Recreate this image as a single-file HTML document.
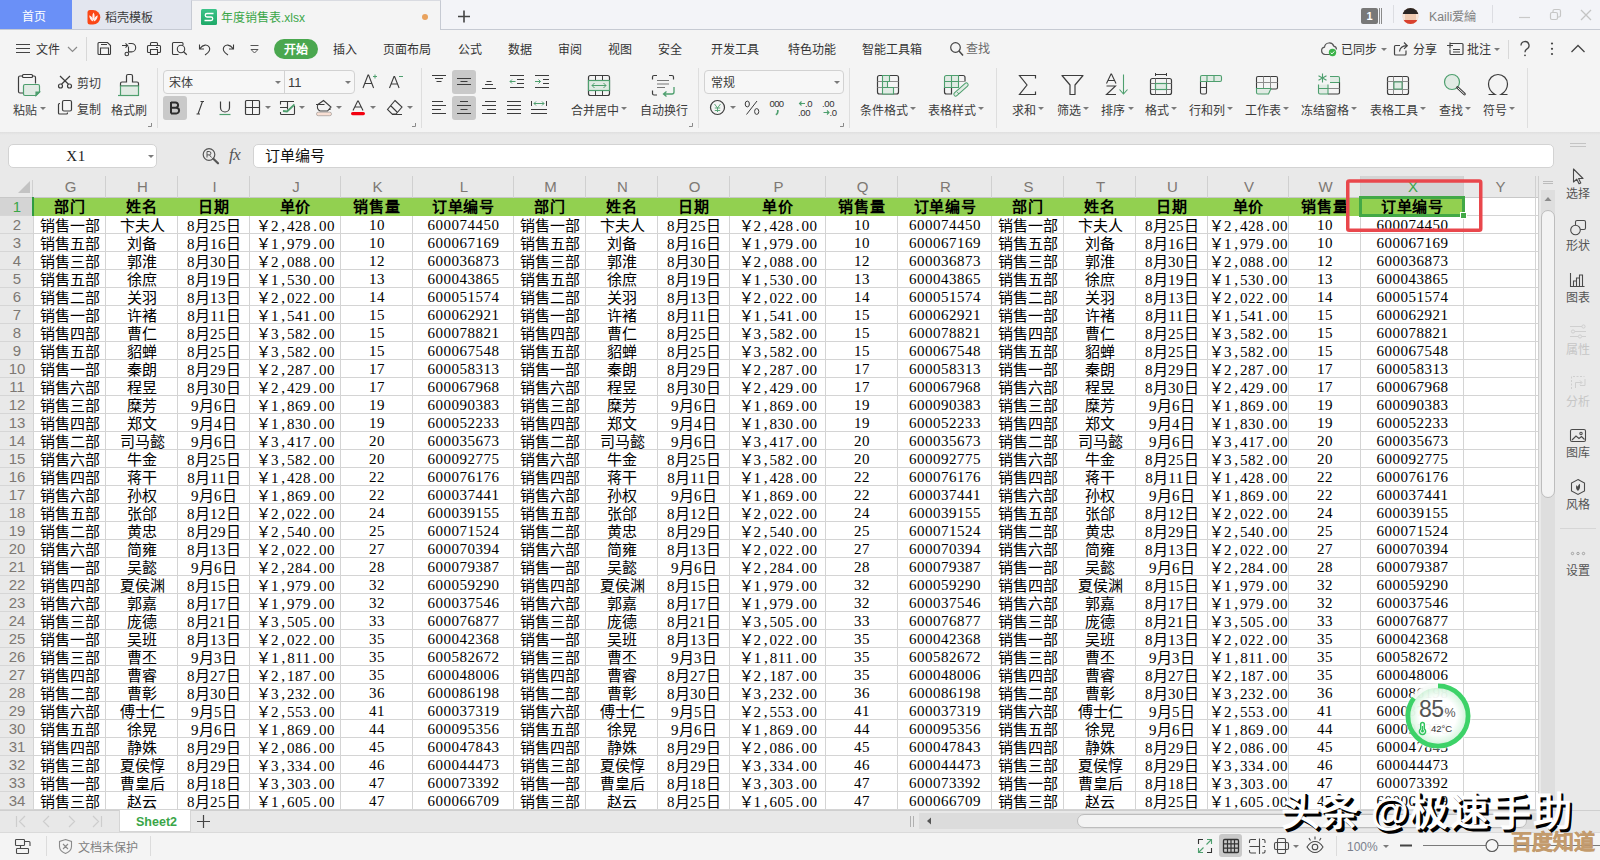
<!DOCTYPE html>
<html lang="zh-CN"><head><meta charset="utf-8"><title>年度销售表.xlsx - WPS</title>
<style>
*{box-sizing:border-box;margin:0;padding:0}
html,body{width:1600px;height:860px;overflow:hidden;background:#e9e9e9}
body{position:relative;font-family:"Liberation Sans",sans-serif;font-size:12px;color:#333}
.a{position:absolute}
svg{position:absolute;overflow:visible}
/* ---------- tab bar ---------- */
#tabs{left:0;top:0;width:1600px;height:30px;background:#f3f4f8;border-bottom:1px solid #c6cad3}
#t1{left:0;top:0;width:72px;height:29px;background:#6a90f7;color:#fff;text-align:center;line-height:34px;font-size:12px;padding-right:4px;overflow:hidden}
#t2{left:72px;top:0;width:119px;height:29px;background:#e3e6ef;line-height:36px;overflow:hidden;font-size:12px;color:#3a3a3a;padding-left:33px}
#t3{left:191px;top:0;width:250px;height:30px;background:#f4f4f4;border:1px solid #c6cad3;border-bottom:none;border-top-color:#d9dbe1;line-height:34px;font-size:12px;color:#3aa648;padding-left:29px;overflow:hidden}
/* ---------- ribbon ---------- */
#rib{left:0;top:30px;width:1600px;height:102px;background:#f4f4f4}
.m{position:absolute;top:42px;height:16px;line-height:16px;font-size:12px;color:#333;white-space:nowrap}
.l{position:absolute;margin:2px 0 0 -.5px;height:16px;line-height:16px;font-size:12px;color:#3b3b3b;white-space:nowrap}
.vs{position:absolute;width:1px;background:#dedede}
.dd{position:absolute;width:0;height:0;border-left:3px solid transparent;border-right:3px solid transparent;border-top:3px solid #7a7a7a}
.box{position:absolute;background:#f7f7f7;border:1px solid #d2d2d2;border-radius:4px}
.sel{position:absolute;background:#c9c9c9;border-radius:3px}
/* ---------- formula bar ---------- */
#fsh{left:0;top:132px;width:1600px;height:3px;background:linear-gradient(#dfdfdf,#e9e9e9)}
#nb{left:8px;top:144px;width:149px;height:24px;background:#fff;border:1px solid #d3d3d3;border-radius:5px}
#fb{left:253px;top:144px;width:1301px;height:24px;background:#fff;border:1px solid #d3d3d3;border-radius:5px}
/* ---------- grid ---------- */
#grid{left:33px;top:198px;width:1505px;height:612px;background:#fff;overflow:hidden}
.ch{position:absolute;top:176px;height:22px;line-height:22px;text-align:center;padding-left:2px;margin-left:1px;font-size:15px;color:#7d7873;border-right:1px solid #d0d0d0}
.rh{position:absolute;left:0;padding-left:1px;width:33px;height:18px;line-height:18px;text-align:center;font-size:15px;color:#7d7873;border-bottom:1px solid #d6d6d6}
.r{position:absolute;left:0;width:1505px;height:18px;border-bottom:1px solid #d4d4d4;white-space:nowrap;font:15px/19px "Liberation Sans",sans-serif;color:#000}
.r b,.r i{display:inline-block;padding-left:2px;height:17px;text-align:center;font-style:normal;font-weight:normal;vertical-align:top;overflow:hidden}
.r u{display:inline-block;width:8px;text-decoration:none;text-align:center;letter-spacing:0}
.r s,.r .n{font-family:"Liberation Serif",serif;text-decoration:none;letter-spacing:.5px}
#r1{height:18px;background:#92d050;border-bottom:none;font-weight:bold;line-height:18px;letter-spacing:.7px}
#r1 b{font-weight:bold;height:18px}
.vl{position:absolute;top:18px;width:1px;height:594px;background:#d4d4d4}
.c0{width:72px}.c1{width:72px}.c2{width:72px}.c3{width:91px}.c4{width:72px}.c5{width:101px}.c6{width:72px}.c7{width:72px}.c8{width:72px}.c9{width:96px}.c10{width:72px}.c11{width:94px}.c12{width:72px}.c13{width:72px}.c14{width:72px}.c15{width:81px}.c16{width:72px}.c17{width:103px}.c18{width:72px}
</style></head><body>
<div id="tabs" class="a"></div>
<div id="t1" class="a">首页</div>
<div id="t2" class="a">稻壳模板</div>
<div id="t3" class="a">年度销售表.xlsx</div>
<svg style="left:0;top:0" width="1600" height="30">
<path d="M87.5 12.5a2.5 2.5 0 0 1 2.5-2.5h3a7.3 7.3 0 0 1 0 14.6h-3a2.5 2.5 0 0 1-2.5-2.5z" fill="#fb4716"/>
<path d="M93.500 12.500c1.500 2.200 1.500 5.200 0 8.500c-1.500-3.300-1.500-6.300 0-8.500zM89.300 15.200c2.600 1 3.700 3 3.800 6.200c-2.600-1.100-3.800-3.100-3.800-6.200zM97.700 15.200c-2.600 1-3.700 3-3.800 6.200c2.600-1.100 3.800-3.100 3.800-6.200z" fill="#fff" fill-opacity=".92"/>
<defs><linearGradient id="sg" x1="0" y1="0" x2="0" y2="1"><stop offset="0" stop-color="#3cc389"/><stop offset="1" stop-color="#1ea968"/></linearGradient></defs><rect x="201" y="9" width="16" height="16" rx="1.500" fill="url(#sg)"/>
<path d="M213.500 13.500h-6.500a1.750 1.750 0 0 0 0 3.500h4a1.750 1.750 0 0 1 0 3.500h-6.500" fill="none" stroke="#fff" stroke-width="1.300"/>
<circle cx="425" cy="17" r="3" fill="#e9a25d"/>
<path d="M458 16.500h12M464 10.500v12" stroke="#444" stroke-width="1.600"/>
<rect x="1361" y="8" width="17" height="16" rx="2" fill="#787878"/>
<path d="M1379.500 8v16M1381.500 8v16" stroke="#8a8a8a" stroke-width="1"/>
<path d="M1393.500 5v18M1492.500 5v18" stroke="#dcdde2" stroke-width="1"/>
<clipPath id="av"><circle cx="1410.500" cy="16" r="8"/></clipPath>
<g clip-path="url(#av)"><rect x="1402" y="8" width="17" height="17" fill="#f0c9b0"/><rect x="1402" y="7" width="17" height="7" fill="#2b2523"/><rect x="1402" y="20" width="17" height="5" fill="#d9412f"/><rect x="1402" y="14" width="3" height="6" fill="#f7e4d8"/><rect x="1416" y="14" width="3" height="6" fill="#f7e4d8"/></g>
<path d="M1519 17.500h11" stroke="#c9c9c9" stroke-width="1.200"/>
<rect x="1550.500" y="12.500" width="7" height="7" rx="1.500" fill="none" stroke="#c6c6c6" stroke-width="1.200"/><path d="M1553 12.500v-1.500a1.500 1.500 0 0 1 1.500-1.500h4.500a1.500 1.500 0 0 1 1.500 1.500v4.500a1.500 1.500 0 0 1-1.500 1.500h-1.500" fill="none" stroke="#c6c6c6" stroke-width="1.200"/>
<path d="M1581 10l10 10M1591 10l-10 10" stroke="#c4c4c4" stroke-width="1.300"/>
</svg>
<div class="a" style="left:1361px;top:8px;width:17px;height:16px;line-height:16px;text-align:center;color:#fff;font-weight:bold;font-size:11px">1</div>
<div class="a" style="left:1429px;top:9px;height:16px;line-height:16px;font-size:12.300px;color:#808080;white-space:nowrap">Kaili爱綸</div>
<div id="rib" class="a"></div>
<svg style="left:0;top:30px" width="1600" height="36" viewBox="0 30 1600 36" fill="none" stroke="#3c3c3c" stroke-width="1.200">
<path d="M16 44.500h14M16 48.500h14M16 52.500h14" stroke="#444"/>
<path d="M68 47l4.500 4.500l4.500-4.500" stroke="#8a8a8a"/>
<path d="M86.500 37v24" stroke="#d8d8d8" stroke-width="1"/>
<path d="M99 42.500h8.500l3 3v8a1 1 0 0 1-1 1h-10.500a1 1 0 0 1-1-1v-10a1 1 0 0 1 1-1zM101 44.500h6M100.500 54.500v-6.500h8v6.500" stroke-width="1.100"/>
<path d="M122 45.500h5.500M125.500 43.300l2.200 2.200l-2.200 2.200M128.500 43.500h3a4.200 4.200 0 0 1 0 8.400h-3.500M128.500 46.500v6" stroke-width="1.100"/><circle cx="126.800" cy="54" r="1.800" stroke-width="1.100"/>
<path d="M150.500 45.500v-2a1 1 0 0 1 1-1h5a1 1 0 0 1 1 1v2M150.500 52.500h-2a1 1 0 0 1-1-1v-5a1 1 0 0 1 1-1h11a1 1 0 0 1 1 1v5a1 1 0 0 1-1 1h-2M150.500 49.500h7v5h-7zM156 47.500h2" stroke-width="1.100"/>
<path d="M178.500 54.500h-5a1 1 0 0 1-1-1v-10a1 1 0 0 1 1-1h8.500a1 1 0 0 1 1 1v1.500" stroke-width="1.100"/><circle cx="181" cy="49" r="3.700" stroke-width="1.100"/><path d="M183.600 51.800l3.200 3"/>
<path d="M199.500 44.500v4.500h4.500M200 48.500c3-4.200 7.500-4.500 9.300-1.200c1.500 3-.8 5.500-4.300 7.700" stroke-width="1.100"/>
<path d="M233.500 44.500v4.500h-4.500M233 48.500c-3-4.200-7.500-4.500-9.300-1.200c-1.500 3 .8 5.500 4.300 7.700" stroke-width="1.100"/>
<path d="M250.500 45.500h8M251 49.500h7l-3.500 3.500z" stroke="#555" stroke-width="1"/>
<rect x="274" y="39" width="44" height="20" rx="10" fill="#4aa74f" stroke="none"/>
<circle cx="955.500" cy="47.500" r="4.800" stroke="#444"/><path d="M959 51l4 4.500" stroke="#444" stroke-width="1.500"/>
<path d="M1331 54.500h-6a3.700 3.700 0 0 1-.5-7.300a4.800 4.800 0 0 1 9.300-1a3.400 3.400 0 0 1 2.700 3.300" stroke="#555"/>
<circle cx="1332.500" cy="52.500" r="3.700" fill="#3cb34a" stroke="none"/><path d="M1330.700 52.600l1.300 1.300l2.300-2.500" stroke="#fff" stroke-width="1"/>
<path d="M1400 45.500h-4.500a1 1 0 0 0-1 1v7.500a1 1 0 0 0 1 1h9.500a1 1 0 0 0 1-1v-3.500M1399.500 51.500c.5-3.500 2.700-5.500 7-5.800M1404 42.500l3.300 3.200l-3.300 3.200" stroke="#444"/>
<path d="M1450.500 43.500h11.500a1 1 0 0 1 1 1v9a1 1 0 0 1-1 1h-11a1 1 0 0 1-1-1v-4M1447 45.500h6M1450 42.500v6M1453 49.500h7M1453 52h7" stroke="#444"/>
<path d="M1508.500 40v19" stroke="#d8d8d8" stroke-width="1"/>
<path d="M1521 45.500a4 4 0 1 1 5.800 3.600c-1.300.8-1.800 1.600-1.800 3.100" stroke="#444" stroke-width="1.300"/><circle cx="1525" cy="55.300" r=".9" fill="#444" stroke="none"/>
<g fill="#444" stroke="none"><circle cx="1552" cy="43.500" r="1.100"/><circle cx="1552" cy="48.800" r="1.100"/><circle cx="1552" cy="54" r="1.100"/></g>
<path d="M1571.500 52l6.500-6.500l6.500 6.500" stroke="#444" stroke-width="1.300"/>
</svg>
<div class="m" style="left:36px">文件</div>
<div class="m" style="left:333px">插入</div>
<div class="m" style="left:383px">页面布局</div>
<div class="m" style="left:458px">公式</div>
<div class="m" style="left:508px">数据</div>
<div class="m" style="left:558px">审阅</div>
<div class="m" style="left:608px">视图</div>
<div class="m" style="left:658px">安全</div>
<div class="m" style="left:711px">开发工具</div>
<div class="m" style="left:788px">特色功能</div>
<div class="m" style="left:862px">智能工具箱</div>
<div class="m" style="left:965px;left:966px;top:41px;color:#6a6a6a">查找</div>
<div class="m" style="left:1341px">已同步</div>
<div class="m" style="left:1413px">分享</div>
<div class="m" style="left:1467px">批注</div>
<div class="m" style="left:274px;width:44px;text-align:center;color:#fff;font-weight:bold">开始</div>
<div class="dd" style="left:1381px;top:48px"></div><div class="dd" style="left:1494px;top:48px"></div>
<div class="sel" style="left:163px;top:96px;width:24px;height:24px"></div>
<div class="sel" style="left:452px;top:70px;width:24px;height:24px"></div>
<div class="sel" style="left:452px;top:96px;width:24px;height:24px"></div>
<div class="box" style="left:163px;top:70px;width:192px;height:24px"></div>
<div class="a" style="left:284px;top:71px;width:1px;height:22px;background:#d2d2d2"></div>
<div class="box" style="left:704px;top:70px;width:140px;height:24px"></div>
<div class="vs" style="left:157px;top:68px;height:60px"></div>
<div class="vs" style="left:421px;top:68px;height:60px"></div>
<div class="vs" style="left:698px;top:68px;height:60px"></div>
<div class="vs" style="left:849px;top:68px;height:60px"></div>
<div class="vs" style="left:996px;top:68px;height:60px"></div>
<div class="vs" style="left:1527px;top:68px;height:60px"></div>
<div class="l" style="left:169.5px;top:73px">宋体</div><div class="l" style="left:288.5px;top:73px;font-size:13px">11</div><div class="l" style="left:711.5px;top:73px">常规</div>
<div class="dd" style="left:275px;top:81px"></div><div class="dd" style="left:345px;top:81px"></div><div class="dd" style="left:834px;top:81px"></div>
<svg style="left:0;top:66px" width="1600" height="65" viewBox="0 66 1600 65" fill="none" stroke="#3c3c3c" stroke-width="1.200">
<path d="M22.500 76h-2.500a1.500 1.500 0 0 0-1.500 1.500v14a1.500 1.500 0 0 0 1.500 1.500h3M32.500 76h1.500a1.500 1.500 0 0 1 1.500 1.500v6"/><rect x="22.500" y="74.500" width="10" height="3" rx="1"/>
<path d="M25 84.500h13a1.500 1.500 0 0 1 1.500 1.500v6l-3.500 3.500h-11a1.500 1.500 0 0 1-1.500-1.500v-8a1.500 1.500 0 0 1 1.500-1.500z" fill="#e1ebe4" stroke="#4e9f6e"/><path d="M39.500 92h-3.500v3.500z" fill="#4e9f6e" stroke="#4e9f6e"/>
<circle cx="60.500" cy="86" r="2"/><circle cx="69.500" cy="86" r="2"/><path d="M61.500 84.300l8.500-8.300M68.500 84.300l-8.500-8.300"/>
<rect x="62.500" y="100.500" width="9" height="10.500" rx="1.500"/><path d="M60 103.500h-.5a1 1 0 0 0-1 1v8.500a1 1 0 0 0 1 1h7a1 1 0 0 0 1-1v-.500"/>
<path d="M126.500 76a1.500 1.500 0 0 1 1.500-1.500h3a1.500 1.500 0 0 1 1.500 1.500v6h4.500a1.500 1.500 0 0 1 1.500 1.500v2.500h-18v-2.500a1.500 1.500 0 0 1 1.500-1.500h4.500z"/><path d="M120.500 86h18v9.500h-18z" fill="#e1ebe4" stroke="#4e9f6e"/><path d="M118 95.500h20.500" stroke="#4e9f6e"/>
<path d="M151.5 123v3.500h-3.500" stroke="#8a8a8a" stroke-width="1"/>
<path d="M415.5 123v3.500h-3.500" stroke="#8a8a8a" stroke-width="1"/>
<path d="M692.5 123v3.500h-3.500" stroke="#8a8a8a" stroke-width="1"/>
<path d="M843.5 123v3.500h-3.500" stroke="#8a8a8a" stroke-width="1"/>
<path d="M363 88l5-13h.6l5 13M365 83.500h6.600" stroke-width="1.100"/><path d="M373 76.500h4M375 74.500v4" stroke="#4e9f6e" stroke-width="1"/>
<path d="M389.500 88l4.500-11.500h.6l4.500 11.500M391.300 84h6" stroke-width="1.100"/><path d="M399 76.500h4" stroke="#4e9f6e" stroke-width="1"/>
<path d="M171 102v11.500M171 102.500h4.500a2.600 2.600 0 0 1 0 5.200h-4.500M171 107.700h5.200a2.900 2.900 0 0 1 0 5.800h-5.200" stroke="#2e2e2e" stroke-width="2"/>
<path d="M198 114l4.500-12.500M196.500 114h3.500M200.500 101.500h3.500" stroke-width="1.100"/>
<path d="M220.500 101.500v6a4.500 4.500 0 0 0 9 0v-6" stroke-width="1.200"/><path d="M219.500 114.500h11" stroke="#4e9f6e"/>
<rect x="245.500" y="100.500" width="14" height="14" rx="1"/><path d="M252.500 100.500v14M245.500 107.500h14" stroke-width="1"/>
<path d="M294 101.500h-14M280 107.500h7M280.500 101.500v3M287.500 101.500v8M294.500 106v7.500a1 1 0 0 1-1 1h-12a1 1 0 0 1-1-1v-1.500" stroke-width="1.100"/><path d="M283 111l4 .5l7.500-7" stroke="#4e9f6e" stroke-width="1.800"/>
<path d="M323.500 100.500l7.500 6.500l-3.500 4h-7.500a4.500 4.500 0 0 1-2-6.500zM316 104.500h8.500M330 107.500v2.500" stroke-width="1.100"/><rect x="316.500" y="112.200" width="15" height="3.500" rx="1.700" fill="#f9dfd3" stroke="#a9a29e" stroke-width=".8"/>
<path d="M353 110.500l4.700-9.500h.6l4.700 9.500M354.800 107h6.400" stroke-width="1.100"/><rect x="351" y="112" width="14" height="3.200" rx="1.600" fill="#f2000f" stroke="none"/>
<path d="M395 100.500l7 6.500l-6 7h-4l-4.500-4.500zM391 106l6 6M392 114.500h10" stroke-width="1.100"/>
<path d="M432 75.500h14M435 78.500h8M436.500 81.500h5" stroke-width="1"/>
<path d="M457 78.500h14M460.500 81.500h7M457 84.500h14" stroke-width="1.100"/>
<path d="M486.500 81.500h5M485 84.500h8M482 88.500h14" stroke-width="1"/>
<path d="M510 75.500h14M517 79.500h7M517 83.500h7M510 87.500h14" stroke-width="1"/><path d="M515.500 81.500h-5.500M512 79.500l-2 2l2 2" stroke="#4e9f6e" stroke-width="1"/>
<path d="M535 75.500h14M543 79.500h6M543 83.500h6M535 87.500h14" stroke-width="1"/><path d="M535 81.500h5.500M538.500 79.500l2 2l-2 2" stroke="#4e9f6e" stroke-width="1"/>
<path d="M432 101.500h11M432 105.500h14M432 109.500h9M432 113.500h14" stroke-width="1"/>
<path d="M460 101.500h8M457 105.500h14M460.500 109.500h7M457 113.500h14" stroke-width="1.100"/>
<path d="M485 101.500h11M482 105.500h14M487 109.500h9M482 113.500h14" stroke-width="1"/>
<path d="M507 101.500h14M507 105.500h14M507 109.500h14M507 113.500h14" stroke-width="1"/>
<path d="M531.500 101v5M546.500 101v5M531 109.500h16M531 113.500h16" stroke-width="1"/><path d="M534 103.500h10M536 101.500l-2 2l2 2M542 101.500l2 2l-2 2" stroke="#4e9f6e" stroke-width="1"/>
<rect x="588.500" y="75.500" width="21" height="20" rx="2"/><path d="M595.500 75.500v5M602.500 75.500v5M595.500 90.500v5M602.500 90.500v5" stroke-width="1"/><rect x="588.500" y="80.500" width="21" height="10" fill="#e1ebe4" stroke="#4e9f6e"/><path d="M592 85.500h14M594.500 83l-2.500 2.500l2.500 2.500M603.500 83l2.500 2.500l-2.500 2.500" stroke="#4e9f6e" stroke-width="1"/>
<path d="M652.500 79.500v-2.500a1.500 1.500 0 0 1 1.500-1.500h3M669 75.500h3a1.500 1.500 0 0 1 1.500 1.500v2.500M652.500 90.500v3a1.500 1.500 0 0 0 1.500 1.500h3" /><path d="M657 80.500h12M657 84h12M657 87.500h8" stroke="#777" stroke-width="1"/><path d="M674 87v5a2 2 0 0 1-2 2h-8M666.500 91.500l-3 2.500l3 2.500" stroke="#4e9f6e" stroke-width="1.300"/>
<circle cx="717.500" cy="107.500" r="7"/><path d="M714.500 104l3 4l3-4M717.500 108v4M714.800 108h5.400M714.800 110.500h5.400" stroke="#4e9f6e" stroke-width=".9"/>
<ellipse cx="747.300" cy="104" rx="2.100" ry="2.900" stroke-width="1"/><ellipse cx="756.700" cy="111.500" rx="2.100" ry="2.900" stroke-width="1"/><path d="M757 101l-10.500 13.500" stroke-width="1"/>
<path d="M777.800 110v1.800c0 1.500-.7 2.500-2 3" stroke="#4e9f6e" stroke-width="1.700"/>
<path d="M805 103.500h-5.500M801.500 101.500l-2 2l2 2M829 112.500h-5.500M827 110.500l2 2l-2 2" stroke="#4e9f6e" stroke-width="1.100"/>
<rect x="877.500" y="75.500" width="21" height="18.500" rx="2"/><path d="M877.500 81.500h21M877.500 87.500h21" stroke-width="1" stroke="#8c8c8c"/><path d="M882.500 75.500h7v6h-7zM882.500 81.500h5v6h-5zM882.500 87.500h11v6.500h-11z" fill="#e1ebe4" stroke="#4e9f6e" stroke-width="1.100"/>
<path d="M958.500 75.500h4.500a2 2 0 0 1 2 2v4M944.500 87.500v4.500a2 2 0 0 0 2 2h5v-6.500" stroke-width="1.200"/><path d="M958.500 81.500h6.500" stroke="#999" stroke-width="1"/><path d="M946.500 75.500h12v12h-14v-10a2 2 0 0 1 2-2zM951.500 75.500v12M944.500 81.500h14" fill="#e1ebe4" stroke="#4e9f6e" stroke-width="1.100"/><rect x="952" y="87.700" width="18" height="3.600" rx="1.800" transform="rotate(-42 961 89.500)" fill="#e1ebe4" stroke="#4e9f6e" stroke-width="1"/><path d="M957.300 92.200l1.600 1.800" stroke="#4e9f6e" stroke-width="1"/>
<path d="M1035.500 78.500v-3h-16l7.500 9.500l-7.500 9.500h16v-3" stroke-width="1.200"/>
<path d="M1062 75.500h21l-8 9.500v9.500h-5v-9.500z" stroke-width="1.200" stroke-linejoin="round"/>
<path d="M1106.500 83.500l4.500-9.500h.5l4.500 9.500M1108 80.500h6.500M1106.500 86h9l-9 8.500h9.500" stroke-width="1.100"/><path d="M1123.500 74.500v19M1119.500 89.500l4 4.500l4-4.500" stroke="#4e9f6e" stroke-width="1.100"/>
<rect x="1150.500" y="78.500" width="21" height="16" rx="2"/><path d="M1155.500 78.500v16M1166.500 78.500v16M1150.500 83.500h21M1150.500 89.500h21" stroke-width="1" stroke="#777"/><rect x="1155.500" y="83.500" width="11" height="6" fill="#e1ebe4" stroke="#4e9f6e"/><path d="M1155 74.500h12M1155.500 73v3M1166.500 73v3" stroke-width="1"/>
<path d="M1200.500 81.500v11a1.500 1.500 0 0 0 1.500 1.500h3a1.500 1.500 0 0 0 1.500-1.500v-11M1200.500 87.500h6" stroke-width="1.100"/><path d="M1200.500 81.500v-4.500a1.500 1.500 0 0 1 1.500-1.500h18a1.500 1.500 0 0 1 1.500 1.500v3a1.500 1.500 0 0 1-1.500 1.500zM1207 75.500v6M1214 75.500v6" fill="#e1ebe4" stroke="#4e9f6e" stroke-width="1.100"/>
<path d="M1256.500 88.500v-10.500a1.500 1.500 0 0 1 1.500-1.500h18a1.500 1.500 0 0 1 1.500 1.500v9.500a1.500 1.500 0 0 1-1.500 1.500h-5" stroke-width="1.100"/><path d="M1263.500 76.500v12M1270.500 76.500v12M1256.500 82.500h21" stroke="#8c8c8c" stroke-width="1"/><path d="M1256.500 88.500h14.500l-2.500 5.500h-10.500a1.500 1.500 0 0 1-1.500-1.500z" fill="#e1ebe4" stroke="#4e9f6e" stroke-width="1.100"/>
<path d="M1330 76.500h8a1.500 1.500 0 0 1 1.500 1.500v4.500h-9.500" fill="#e1ebe4" stroke="#4e9f6e" stroke-width="1.100"/><path d="M1339.500 82.500v10a1.500 1.500 0 0 1-1.500 1.500h-10" stroke-width="1.200"/><path d="M1328 88.500h11.500" stroke="#888" stroke-width="1"/><path d="M1318.500 84.500v8a1.500 1.500 0 0 0 1.500 1.500h8v-9.500M1318.500 88.500h9.500" fill="#e1ebe4" stroke="#4e9f6e" stroke-width="1.100"/><path d="M1322.500 73.500v9M1318.500 75.800l8 4.500M1326.500 75.800l-8 4.500" stroke="#4e9f6e" stroke-width="1.100"/>
<rect x="1387.500" y="76.500" width="21" height="18" rx="2"/><path d="M1393.500 76.500v18M1402.500 76.500v18M1387.500 81.500h21M1387.500 89.500h21" stroke-width="1" stroke="#8c8c8c"/><rect x="1394" y="82" width="8" height="7" fill="#e1ebe4" stroke="#4e9f6e" stroke-width="1"/>
<circle cx="1452" cy="82" r="7.500" fill="#e1ebe4" stroke="#4e9f6e"/><path d="M1457.500 87.500l7 6.500" stroke-width="2.600" stroke-linecap="round"/><path d="M1458 88l6.200 5.800" stroke="#f4f4f4" stroke-width="1" stroke-linecap="round"/>
<path d="M1488.500 94.500h6.500c-4-2.500-6.500-6-6.500-10.500a9.500 9.500 0 0 1 19 0c0 4.500-2.500 8-6.500 10.500h6.500" stroke-width="1.200"/>
</svg>
<div class="l" style="left:13.5px;top:101px">粘贴</div><div class="dd" style="left:40px;top:107px"></div><div class="l" style="left:77.5px;top:74px">剪切</div><div class="l" style="left:77.5px;top:100px">复制</div><div class="l" style="left:111.5px;top:101px">格式刷</div>
<div class="l" style="left:571px;top:101px">合并居中</div><div class="dd" style="left:621px;top:107px"></div><div class="l" style="left:640.5px;top:101px">自动换行</div>
<div class="l" style="left:860px;top:101px">条件格式</div><div class="dd" style="left:910px;top:107px"></div><div class="l" style="left:928px;top:101px">表格样式</div><div class="dd" style="left:978px;top:107px"></div>
<div class="l" style="left:1012px;top:101px">求和</div><div class="dd" style="left:1038px;top:107px"></div>
<div class="l" style="left:1057px;top:101px">筛选</div><div class="dd" style="left:1083px;top:107px"></div>
<div class="l" style="left:1101px;top:101px">排序</div><div class="dd" style="left:1128px;top:107px"></div>
<div class="l" style="left:1145px;top:101px">格式</div><div class="dd" style="left:1171px;top:107px"></div>
<div class="l" style="left:1189px;top:101px">行和列</div><div class="dd" style="left:1227px;top:107px"></div>
<div class="l" style="left:1245px;top:101px">工作表</div><div class="dd" style="left:1283px;top:107px"></div>
<div class="l" style="left:1301px;top:101px">冻结窗格</div><div class="dd" style="left:1351px;top:107px"></div>
<div class="l" style="left:1370px;top:101px">表格工具</div><div class="dd" style="left:1420px;top:107px"></div>
<div class="l" style="left:1439px;top:101px">查找</div><div class="dd" style="left:1465px;top:107px"></div>
<div class="l" style="left:1483px;top:101px">符号</div><div class="dd" style="left:1509px;top:107px"></div>
<div class="dd" style="left:265px;top:106px"></div>
<div class="dd" style="left:299px;top:106px"></div>
<div class="dd" style="left:336px;top:106px"></div>
<div class="dd" style="left:370px;top:106px"></div>
<div class="dd" style="left:407px;top:106px"></div>
<div class="dd" style="left:730px;top:106px"></div>
<div class="a" style="left:769.500px;top:98.500px;font-size:9.500px;line-height:10px;color:#333;letter-spacing:-.6px">000</div>
<div class="a" style="left:805px;top:98.500px;font-size:9.500px;line-height:10px;color:#333;letter-spacing:-.3px">.0</div><div class="a" style="left:798px;top:107.500px;font-size:9.500px;line-height:10px;color:#333;letter-spacing:-.3px">.00</div>
<div class="a" style="left:822px;top:98.500px;font-size:9.500px;line-height:10px;color:#333;letter-spacing:-.3px">.00</div><div class="a" style="left:829.500px;top:107.500px;font-size:9.500px;line-height:10px;color:#333;letter-spacing:-.3px">.0</div>
<div id="fsh" class="a"></div>
<div id="nb" class="a"></div><div id="fb" class="a"></div>
<div class="a" style="left:60px;top:148px;width:32px;height:16px;line-height:16px;text-align:center;font:15px/16px 'Liberation Serif',serif;letter-spacing:.5px;color:#222">X1</div>
<div class="dd" style="left:148px;top:155px"></div>
<div class="a" style="left:265px;top:147px;height:18px;line-height:18px;font-size:15px;color:#111">订单编号</div>
<svg style="left:190px;top:140px" width="70" height="32" viewBox="190 140 70 32" fill="none" stroke="#555" stroke-width="1.200">
<circle cx="209" cy="154.500" r="5.800"/><path d="M213.300 158.800l4.700 4.500" stroke-width="2.200" stroke-linecap="round"/><path d="M207 157.500v-6h2.200a1.700 1.700 0 0 1 0 3.400h-2.200M209.500 155l2 2.500" stroke-width="1"/>
</svg>
<div class="a" style="left:229px;top:145px;font:italic 17px/20px 'Liberation Serif',serif;color:#555;letter-spacing:-.5px">fx</div>
<div class="a" style="left:0;top:197px;width:1538px;height:1px;background:#c8c8c8"></div>
<div class="a" style="left:32px;top:180px;width:1px;height:17px;background:#d0d0d0"></div>
<svg style="left:18px;top:181px" width="12" height="12"><path d="M12 0V12H0Z" fill="#c3c3c3"/></svg>
<div class="ch" style="left:33px;width:72px">G</div><div class="ch" style="left:105px;width:72px">H</div><div class="ch" style="left:177px;width:72px">I</div><div class="ch" style="left:249px;width:91px">J</div><div class="ch" style="left:340px;width:72px">K</div><div class="ch" style="left:412px;width:101px">L</div><div class="ch" style="left:513px;width:72px">M</div><div class="ch" style="left:585px;width:72px">N</div><div class="ch" style="left:657px;width:72px">O</div><div class="ch" style="left:729px;width:96px">P</div><div class="ch" style="left:825px;width:72px">Q</div><div class="ch" style="left:897px;width:94px">R</div><div class="ch" style="left:991px;width:72px">S</div><div class="ch" style="left:1063px;width:72px">T</div><div class="ch" style="left:1135px;width:72px">U</div><div class="ch" style="left:1207px;width:81px">V</div><div class="ch" style="left:1288px;width:72px">W</div><div class="ch" style="left:1360px;width:103px;background:#d4d4d4;color:#3aa648">X</div><div class="ch" style="left:1463px;width:72px">Y</div>
<div class="rh" style="top:198px;background:#d4d4d4;color:#3aa648;border-right:1px solid #2f9a41;width:34px">1</div><div class="rh" style="top:216px">2</div><div class="rh" style="top:234px">3</div><div class="rh" style="top:252px">4</div><div class="rh" style="top:270px">5</div><div class="rh" style="top:288px">6</div><div class="rh" style="top:306px">7</div><div class="rh" style="top:324px">8</div><div class="rh" style="top:342px">9</div><div class="rh" style="top:360px">10</div><div class="rh" style="top:378px">11</div><div class="rh" style="top:396px">12</div><div class="rh" style="top:414px">13</div><div class="rh" style="top:432px">14</div><div class="rh" style="top:450px">15</div><div class="rh" style="top:468px">16</div><div class="rh" style="top:486px">17</div><div class="rh" style="top:504px">18</div><div class="rh" style="top:522px">19</div><div class="rh" style="top:540px">20</div><div class="rh" style="top:558px">21</div><div class="rh" style="top:576px">22</div><div class="rh" style="top:594px">23</div><div class="rh" style="top:612px">24</div><div class="rh" style="top:630px">25</div><div class="rh" style="top:648px">26</div><div class="rh" style="top:666px">27</div><div class="rh" style="top:684px">28</div><div class="rh" style="top:702px">29</div><div class="rh" style="top:720px">30</div><div class="rh" style="top:738px">31</div><div class="rh" style="top:756px">32</div><div class="rh" style="top:774px">33</div><div class="rh" style="top:792px">34</div>
<div id="grid" class="a">
<div class="vl" style="left:72px"></div><div class="vl" style="left:144px"></div><div class="vl" style="left:216px"></div><div class="vl" style="left:307px"></div><div class="vl" style="left:379px"></div><div class="vl" style="left:480px"></div><div class="vl" style="left:552px"></div><div class="vl" style="left:624px"></div><div class="vl" style="left:696px"></div><div class="vl" style="left:792px"></div><div class="vl" style="left:864px"></div><div class="vl" style="left:958px"></div><div class="vl" style="left:1030px"></div><div class="vl" style="left:1102px"></div><div class="vl" style="left:1174px"></div><div class="vl" style="left:1255px"></div><div class="vl" style="left:1327px"></div><div class="vl" style="left:1430px"></div><div class="vl" style="left:1502px"></div>
<div class="a" style="left:1430px;top:17px;width:75px;height:1px;background:#d4d4d4"></div><div class="a" style="left:1502px;top:0;width:1px;height:18px;background:#d4d4d4"></div>
<div class="r" id="r1" style="top:0;width:1431px"><b class="c0">部门</b><b class="c1">姓名</b><b class="c2">日期</b><b class="c3">单价</b><b class="c4">销售量</b><b class="c5">订单编号</b><b class="c6">部门</b><b class="c7">姓名</b><b class="c8">日期</b><b class="c9">单价</b><b class="c10">销售量</b><b class="c11">订单编号</b><b class="c12">部门</b><b class="c13">姓名</b><b class="c14">日期</b><b class="c15">单价</b><b class="c16">销售量</b><b class="c17">订单编号</b></div>
<div class="r" style="top:18px"><b class="c0">销售一部</b><b class="c1">卞夫人</b><b class="c2"><s>8</s>月<s>25</s>日</b><b class="c3">￥<s>2<u>,</u>428<u>.</u>00</s></b><b class="c4 n">10</b><b class="c5 n">600074450</b><b class="c6">销售一部</b><b class="c7">卞夫人</b><b class="c8"><s>8</s>月<s>25</s>日</b><b class="c9">￥<s>2<u>,</u>428<u>.</u>00</s></b><b class="c10 n">10</b><b class="c11 n">600074450</b><b class="c12">销售一部</b><b class="c13">卞夫人</b><b class="c14"><s>8</s>月<s>25</s>日</b><b class="c15">￥<s>2<u>,</u>428<u>.</u>00</s></b><b class="c16 n">10</b><b class="c17 n">600074450</b></div>
<div class="r" style="top:36px"><b class="c0">销售五部</b><b class="c1">刘备</b><b class="c2"><s>8</s>月<s>16</s>日</b><b class="c3">￥<s>1<u>,</u>979<u>.</u>00</s></b><b class="c4 n">10</b><b class="c5 n">600067169</b><b class="c6">销售五部</b><b class="c7">刘备</b><b class="c8"><s>8</s>月<s>16</s>日</b><b class="c9">￥<s>1<u>,</u>979<u>.</u>00</s></b><b class="c10 n">10</b><b class="c11 n">600067169</b><b class="c12">销售五部</b><b class="c13">刘备</b><b class="c14"><s>8</s>月<s>16</s>日</b><b class="c15">￥<s>1<u>,</u>979<u>.</u>00</s></b><b class="c16 n">10</b><b class="c17 n">600067169</b></div>
<div class="r" style="top:54px"><b class="c0">销售三部</b><b class="c1">郭淮</b><b class="c2"><s>8</s>月<s>30</s>日</b><b class="c3">￥<s>2<u>,</u>088<u>.</u>00</s></b><b class="c4 n">12</b><b class="c5 n">600036873</b><b class="c6">销售三部</b><b class="c7">郭淮</b><b class="c8"><s>8</s>月<s>30</s>日</b><b class="c9">￥<s>2<u>,</u>088<u>.</u>00</s></b><b class="c10 n">12</b><b class="c11 n">600036873</b><b class="c12">销售三部</b><b class="c13">郭淮</b><b class="c14"><s>8</s>月<s>30</s>日</b><b class="c15">￥<s>2<u>,</u>088<u>.</u>00</s></b><b class="c16 n">12</b><b class="c17 n">600036873</b></div>
<div class="r" style="top:72px"><b class="c0">销售五部</b><b class="c1">徐庶</b><b class="c2"><s>8</s>月<s>19</s>日</b><b class="c3">￥<s>1<u>,</u>530<u>.</u>00</s></b><b class="c4 n">13</b><b class="c5 n">600043865</b><b class="c6">销售五部</b><b class="c7">徐庶</b><b class="c8"><s>8</s>月<s>19</s>日</b><b class="c9">￥<s>1<u>,</u>530<u>.</u>00</s></b><b class="c10 n">13</b><b class="c11 n">600043865</b><b class="c12">销售五部</b><b class="c13">徐庶</b><b class="c14"><s>8</s>月<s>19</s>日</b><b class="c15">￥<s>1<u>,</u>530<u>.</u>00</s></b><b class="c16 n">13</b><b class="c17 n">600043865</b></div>
<div class="r" style="top:90px"><b class="c0">销售二部</b><b class="c1">关羽</b><b class="c2"><s>8</s>月<s>13</s>日</b><b class="c3">￥<s>2<u>,</u>022<u>.</u>00</s></b><b class="c4 n">14</b><b class="c5 n">600051574</b><b class="c6">销售二部</b><b class="c7">关羽</b><b class="c8"><s>8</s>月<s>13</s>日</b><b class="c9">￥<s>2<u>,</u>022<u>.</u>00</s></b><b class="c10 n">14</b><b class="c11 n">600051574</b><b class="c12">销售二部</b><b class="c13">关羽</b><b class="c14"><s>8</s>月<s>13</s>日</b><b class="c15">￥<s>2<u>,</u>022<u>.</u>00</s></b><b class="c16 n">14</b><b class="c17 n">600051574</b></div>
<div class="r" style="top:108px"><b class="c0">销售一部</b><b class="c1">许褚</b><b class="c2"><s>8</s>月<s>11</s>日</b><b class="c3">￥<s>1<u>,</u>541<u>.</u>00</s></b><b class="c4 n">15</b><b class="c5 n">600062921</b><b class="c6">销售一部</b><b class="c7">许褚</b><b class="c8"><s>8</s>月<s>11</s>日</b><b class="c9">￥<s>1<u>,</u>541<u>.</u>00</s></b><b class="c10 n">15</b><b class="c11 n">600062921</b><b class="c12">销售一部</b><b class="c13">许褚</b><b class="c14"><s>8</s>月<s>11</s>日</b><b class="c15">￥<s>1<u>,</u>541<u>.</u>00</s></b><b class="c16 n">15</b><b class="c17 n">600062921</b></div>
<div class="r" style="top:126px"><b class="c0">销售四部</b><b class="c1">曹仁</b><b class="c2"><s>8</s>月<s>25</s>日</b><b class="c3">￥<s>3<u>,</u>582<u>.</u>00</s></b><b class="c4 n">15</b><b class="c5 n">600078821</b><b class="c6">销售四部</b><b class="c7">曹仁</b><b class="c8"><s>8</s>月<s>25</s>日</b><b class="c9">￥<s>3<u>,</u>582<u>.</u>00</s></b><b class="c10 n">15</b><b class="c11 n">600078821</b><b class="c12">销售四部</b><b class="c13">曹仁</b><b class="c14"><s>8</s>月<s>25</s>日</b><b class="c15">￥<s>3<u>,</u>582<u>.</u>00</s></b><b class="c16 n">15</b><b class="c17 n">600078821</b></div>
<div class="r" style="top:144px"><b class="c0">销售五部</b><b class="c1">貂蝉</b><b class="c2"><s>8</s>月<s>25</s>日</b><b class="c3">￥<s>3<u>,</u>582<u>.</u>00</s></b><b class="c4 n">15</b><b class="c5 n">600067548</b><b class="c6">销售五部</b><b class="c7">貂蝉</b><b class="c8"><s>8</s>月<s>25</s>日</b><b class="c9">￥<s>3<u>,</u>582<u>.</u>00</s></b><b class="c10 n">15</b><b class="c11 n">600067548</b><b class="c12">销售五部</b><b class="c13">貂蝉</b><b class="c14"><s>8</s>月<s>25</s>日</b><b class="c15">￥<s>3<u>,</u>582<u>.</u>00</s></b><b class="c16 n">15</b><b class="c17 n">600067548</b></div>
<div class="r" style="top:162px"><b class="c0">销售一部</b><b class="c1">秦朗</b><b class="c2"><s>8</s>月<s>29</s>日</b><b class="c3">￥<s>2<u>,</u>287<u>.</u>00</s></b><b class="c4 n">17</b><b class="c5 n">600058313</b><b class="c6">销售一部</b><b class="c7">秦朗</b><b class="c8"><s>8</s>月<s>29</s>日</b><b class="c9">￥<s>2<u>,</u>287<u>.</u>00</s></b><b class="c10 n">17</b><b class="c11 n">600058313</b><b class="c12">销售一部</b><b class="c13">秦朗</b><b class="c14"><s>8</s>月<s>29</s>日</b><b class="c15">￥<s>2<u>,</u>287<u>.</u>00</s></b><b class="c16 n">17</b><b class="c17 n">600058313</b></div>
<div class="r" style="top:180px"><b class="c0">销售六部</b><b class="c1">程昱</b><b class="c2"><s>8</s>月<s>30</s>日</b><b class="c3">￥<s>2<u>,</u>429<u>.</u>00</s></b><b class="c4 n">17</b><b class="c5 n">600067968</b><b class="c6">销售六部</b><b class="c7">程昱</b><b class="c8"><s>8</s>月<s>30</s>日</b><b class="c9">￥<s>2<u>,</u>429<u>.</u>00</s></b><b class="c10 n">17</b><b class="c11 n">600067968</b><b class="c12">销售六部</b><b class="c13">程昱</b><b class="c14"><s>8</s>月<s>30</s>日</b><b class="c15">￥<s>2<u>,</u>429<u>.</u>00</s></b><b class="c16 n">17</b><b class="c17 n">600067968</b></div>
<div class="r" style="top:198px"><b class="c0">销售三部</b><b class="c1">糜芳</b><b class="c2"><s>9</s>月<s>6</s>日</b><b class="c3">￥<s>1<u>,</u>869<u>.</u>00</s></b><b class="c4 n">19</b><b class="c5 n">600090383</b><b class="c6">销售三部</b><b class="c7">糜芳</b><b class="c8"><s>9</s>月<s>6</s>日</b><b class="c9">￥<s>1<u>,</u>869<u>.</u>00</s></b><b class="c10 n">19</b><b class="c11 n">600090383</b><b class="c12">销售三部</b><b class="c13">糜芳</b><b class="c14"><s>9</s>月<s>6</s>日</b><b class="c15">￥<s>1<u>,</u>869<u>.</u>00</s></b><b class="c16 n">19</b><b class="c17 n">600090383</b></div>
<div class="r" style="top:216px"><b class="c0">销售四部</b><b class="c1">郑文</b><b class="c2"><s>9</s>月<s>4</s>日</b><b class="c3">￥<s>1<u>,</u>830<u>.</u>00</s></b><b class="c4 n">19</b><b class="c5 n">600052233</b><b class="c6">销售四部</b><b class="c7">郑文</b><b class="c8"><s>9</s>月<s>4</s>日</b><b class="c9">￥<s>1<u>,</u>830<u>.</u>00</s></b><b class="c10 n">19</b><b class="c11 n">600052233</b><b class="c12">销售四部</b><b class="c13">郑文</b><b class="c14"><s>9</s>月<s>4</s>日</b><b class="c15">￥<s>1<u>,</u>830<u>.</u>00</s></b><b class="c16 n">19</b><b class="c17 n">600052233</b></div>
<div class="r" style="top:234px"><b class="c0">销售二部</b><b class="c1">司马懿</b><b class="c2"><s>9</s>月<s>6</s>日</b><b class="c3">￥<s>3<u>,</u>417<u>.</u>00</s></b><b class="c4 n">20</b><b class="c5 n">600035673</b><b class="c6">销售二部</b><b class="c7">司马懿</b><b class="c8"><s>9</s>月<s>6</s>日</b><b class="c9">￥<s>3<u>,</u>417<u>.</u>00</s></b><b class="c10 n">20</b><b class="c11 n">600035673</b><b class="c12">销售二部</b><b class="c13">司马懿</b><b class="c14"><s>9</s>月<s>6</s>日</b><b class="c15">￥<s>3<u>,</u>417<u>.</u>00</s></b><b class="c16 n">20</b><b class="c17 n">600035673</b></div>
<div class="r" style="top:252px"><b class="c0">销售六部</b><b class="c1">牛金</b><b class="c2"><s>8</s>月<s>25</s>日</b><b class="c3">￥<s>3<u>,</u>582<u>.</u>00</s></b><b class="c4 n">20</b><b class="c5 n">600092775</b><b class="c6">销售六部</b><b class="c7">牛金</b><b class="c8"><s>8</s>月<s>25</s>日</b><b class="c9">￥<s>3<u>,</u>582<u>.</u>00</s></b><b class="c10 n">20</b><b class="c11 n">600092775</b><b class="c12">销售六部</b><b class="c13">牛金</b><b class="c14"><s>8</s>月<s>25</s>日</b><b class="c15">￥<s>3<u>,</u>582<u>.</u>00</s></b><b class="c16 n">20</b><b class="c17 n">600092775</b></div>
<div class="r" style="top:270px"><b class="c0">销售四部</b><b class="c1">蒋干</b><b class="c2"><s>8</s>月<s>11</s>日</b><b class="c3">￥<s>1<u>,</u>428<u>.</u>00</s></b><b class="c4 n">22</b><b class="c5 n">600076176</b><b class="c6">销售四部</b><b class="c7">蒋干</b><b class="c8"><s>8</s>月<s>11</s>日</b><b class="c9">￥<s>1<u>,</u>428<u>.</u>00</s></b><b class="c10 n">22</b><b class="c11 n">600076176</b><b class="c12">销售四部</b><b class="c13">蒋干</b><b class="c14"><s>8</s>月<s>11</s>日</b><b class="c15">￥<s>1<u>,</u>428<u>.</u>00</s></b><b class="c16 n">22</b><b class="c17 n">600076176</b></div>
<div class="r" style="top:288px"><b class="c0">销售六部</b><b class="c1">孙权</b><b class="c2"><s>9</s>月<s>6</s>日</b><b class="c3">￥<s>1<u>,</u>869<u>.</u>00</s></b><b class="c4 n">22</b><b class="c5 n">600037441</b><b class="c6">销售六部</b><b class="c7">孙权</b><b class="c8"><s>9</s>月<s>6</s>日</b><b class="c9">￥<s>1<u>,</u>869<u>.</u>00</s></b><b class="c10 n">22</b><b class="c11 n">600037441</b><b class="c12">销售六部</b><b class="c13">孙权</b><b class="c14"><s>9</s>月<s>6</s>日</b><b class="c15">￥<s>1<u>,</u>869<u>.</u>00</s></b><b class="c16 n">22</b><b class="c17 n">600037441</b></div>
<div class="r" style="top:306px"><b class="c0">销售五部</b><b class="c1">张郃</b><b class="c2"><s>8</s>月<s>12</s>日</b><b class="c3">￥<s>2<u>,</u>022<u>.</u>00</s></b><b class="c4 n">24</b><b class="c5 n">600039155</b><b class="c6">销售五部</b><b class="c7">张郃</b><b class="c8"><s>8</s>月<s>12</s>日</b><b class="c9">￥<s>2<u>,</u>022<u>.</u>00</s></b><b class="c10 n">24</b><b class="c11 n">600039155</b><b class="c12">销售五部</b><b class="c13">张郃</b><b class="c14"><s>8</s>月<s>12</s>日</b><b class="c15">￥<s>2<u>,</u>022<u>.</u>00</s></b><b class="c16 n">24</b><b class="c17 n">600039155</b></div>
<div class="r" style="top:324px"><b class="c0">销售二部</b><b class="c1">黄忠</b><b class="c2"><s>8</s>月<s>29</s>日</b><b class="c3">￥<s>2<u>,</u>540<u>.</u>00</s></b><b class="c4 n">25</b><b class="c5 n">600071524</b><b class="c6">销售二部</b><b class="c7">黄忠</b><b class="c8"><s>8</s>月<s>29</s>日</b><b class="c9">￥<s>2<u>,</u>540<u>.</u>00</s></b><b class="c10 n">25</b><b class="c11 n">600071524</b><b class="c12">销售二部</b><b class="c13">黄忠</b><b class="c14"><s>8</s>月<s>29</s>日</b><b class="c15">￥<s>2<u>,</u>540<u>.</u>00</s></b><b class="c16 n">25</b><b class="c17 n">600071524</b></div>
<div class="r" style="top:342px"><b class="c0">销售六部</b><b class="c1">简雍</b><b class="c2"><s>8</s>月<s>13</s>日</b><b class="c3">￥<s>2<u>,</u>022<u>.</u>00</s></b><b class="c4 n">27</b><b class="c5 n">600070394</b><b class="c6">销售六部</b><b class="c7">简雍</b><b class="c8"><s>8</s>月<s>13</s>日</b><b class="c9">￥<s>2<u>,</u>022<u>.</u>00</s></b><b class="c10 n">27</b><b class="c11 n">600070394</b><b class="c12">销售六部</b><b class="c13">简雍</b><b class="c14"><s>8</s>月<s>13</s>日</b><b class="c15">￥<s>2<u>,</u>022<u>.</u>00</s></b><b class="c16 n">27</b><b class="c17 n">600070394</b></div>
<div class="r" style="top:360px"><b class="c0">销售一部</b><b class="c1">吴懿</b><b class="c2"><s>9</s>月<s>6</s>日</b><b class="c3">￥<s>2<u>,</u>284<u>.</u>00</s></b><b class="c4 n">28</b><b class="c5 n">600079387</b><b class="c6">销售一部</b><b class="c7">吴懿</b><b class="c8"><s>9</s>月<s>6</s>日</b><b class="c9">￥<s>2<u>,</u>284<u>.</u>00</s></b><b class="c10 n">28</b><b class="c11 n">600079387</b><b class="c12">销售一部</b><b class="c13">吴懿</b><b class="c14"><s>9</s>月<s>6</s>日</b><b class="c15">￥<s>2<u>,</u>284<u>.</u>00</s></b><b class="c16 n">28</b><b class="c17 n">600079387</b></div>
<div class="r" style="top:378px"><b class="c0">销售四部</b><b class="c1">夏侯渊</b><b class="c2"><s>8</s>月<s>15</s>日</b><b class="c3">￥<s>1<u>,</u>979<u>.</u>00</s></b><b class="c4 n">32</b><b class="c5 n">600059290</b><b class="c6">销售四部</b><b class="c7">夏侯渊</b><b class="c8"><s>8</s>月<s>15</s>日</b><b class="c9">￥<s>1<u>,</u>979<u>.</u>00</s></b><b class="c10 n">32</b><b class="c11 n">600059290</b><b class="c12">销售四部</b><b class="c13">夏侯渊</b><b class="c14"><s>8</s>月<s>15</s>日</b><b class="c15">￥<s>1<u>,</u>979<u>.</u>00</s></b><b class="c16 n">32</b><b class="c17 n">600059290</b></div>
<div class="r" style="top:396px"><b class="c0">销售六部</b><b class="c1">郭嘉</b><b class="c2"><s>8</s>月<s>17</s>日</b><b class="c3">￥<s>1<u>,</u>979<u>.</u>00</s></b><b class="c4 n">32</b><b class="c5 n">600037546</b><b class="c6">销售六部</b><b class="c7">郭嘉</b><b class="c8"><s>8</s>月<s>17</s>日</b><b class="c9">￥<s>1<u>,</u>979<u>.</u>00</s></b><b class="c10 n">32</b><b class="c11 n">600037546</b><b class="c12">销售六部</b><b class="c13">郭嘉</b><b class="c14"><s>8</s>月<s>17</s>日</b><b class="c15">￥<s>1<u>,</u>979<u>.</u>00</s></b><b class="c16 n">32</b><b class="c17 n">600037546</b></div>
<div class="r" style="top:414px"><b class="c0">销售三部</b><b class="c1">庞德</b><b class="c2"><s>8</s>月<s>21</s>日</b><b class="c3">￥<s>3<u>,</u>505<u>.</u>00</s></b><b class="c4 n">33</b><b class="c5 n">600076877</b><b class="c6">销售三部</b><b class="c7">庞德</b><b class="c8"><s>8</s>月<s>21</s>日</b><b class="c9">￥<s>3<u>,</u>505<u>.</u>00</s></b><b class="c10 n">33</b><b class="c11 n">600076877</b><b class="c12">销售三部</b><b class="c13">庞德</b><b class="c14"><s>8</s>月<s>21</s>日</b><b class="c15">￥<s>3<u>,</u>505<u>.</u>00</s></b><b class="c16 n">33</b><b class="c17 n">600076877</b></div>
<div class="r" style="top:432px"><b class="c0">销售一部</b><b class="c1">吴班</b><b class="c2"><s>8</s>月<s>13</s>日</b><b class="c3">￥<s>2<u>,</u>022<u>.</u>00</s></b><b class="c4 n">35</b><b class="c5 n">600042368</b><b class="c6">销售一部</b><b class="c7">吴班</b><b class="c8"><s>8</s>月<s>13</s>日</b><b class="c9">￥<s>2<u>,</u>022<u>.</u>00</s></b><b class="c10 n">35</b><b class="c11 n">600042368</b><b class="c12">销售一部</b><b class="c13">吴班</b><b class="c14"><s>8</s>月<s>13</s>日</b><b class="c15">￥<s>2<u>,</u>022<u>.</u>00</s></b><b class="c16 n">35</b><b class="c17 n">600042368</b></div>
<div class="r" style="top:450px"><b class="c0">销售三部</b><b class="c1">曹丕</b><b class="c2"><s>9</s>月<s>3</s>日</b><b class="c3">￥<s>1<u>,</u>811<u>.</u>00</s></b><b class="c4 n">35</b><b class="c5 n">600582672</b><b class="c6">销售三部</b><b class="c7">曹丕</b><b class="c8"><s>9</s>月<s>3</s>日</b><b class="c9">￥<s>1<u>,</u>811<u>.</u>00</s></b><b class="c10 n">35</b><b class="c11 n">600582672</b><b class="c12">销售三部</b><b class="c13">曹丕</b><b class="c14"><s>9</s>月<s>3</s>日</b><b class="c15">￥<s>1<u>,</u>811<u>.</u>00</s></b><b class="c16 n">35</b><b class="c17 n">600582672</b></div>
<div class="r" style="top:468px"><b class="c0">销售四部</b><b class="c1">曹睿</b><b class="c2"><s>8</s>月<s>27</s>日</b><b class="c3">￥<s>2<u>,</u>187<u>.</u>00</s></b><b class="c4 n">35</b><b class="c5 n">600048006</b><b class="c6">销售四部</b><b class="c7">曹睿</b><b class="c8"><s>8</s>月<s>27</s>日</b><b class="c9">￥<s>2<u>,</u>187<u>.</u>00</s></b><b class="c10 n">35</b><b class="c11 n">600048006</b><b class="c12">销售四部</b><b class="c13">曹睿</b><b class="c14"><s>8</s>月<s>27</s>日</b><b class="c15">￥<s>2<u>,</u>187<u>.</u>00</s></b><b class="c16 n">35</b><b class="c17 n">600048006</b></div>
<div class="r" style="top:486px"><b class="c0">销售二部</b><b class="c1">曹彰</b><b class="c2"><s>8</s>月<s>30</s>日</b><b class="c3">￥<s>3<u>,</u>232<u>.</u>00</s></b><b class="c4 n">36</b><b class="c5 n">600086198</b><b class="c6">销售二部</b><b class="c7">曹彰</b><b class="c8"><s>8</s>月<s>30</s>日</b><b class="c9">￥<s>3<u>,</u>232<u>.</u>00</s></b><b class="c10 n">36</b><b class="c11 n">600086198</b><b class="c12">销售二部</b><b class="c13">曹彰</b><b class="c14"><s>8</s>月<s>30</s>日</b><b class="c15">￥<s>3<u>,</u>232<u>.</u>00</s></b><b class="c16 n">36</b><b class="c17 n">600086198</b></div>
<div class="r" style="top:504px"><b class="c0">销售六部</b><b class="c1">傅士仁</b><b class="c2"><s>9</s>月<s>5</s>日</b><b class="c3">￥<s>2<u>,</u>553<u>.</u>00</s></b><b class="c4 n">41</b><b class="c5 n">600037319</b><b class="c6">销售六部</b><b class="c7">傅士仁</b><b class="c8"><s>9</s>月<s>5</s>日</b><b class="c9">￥<s>2<u>,</u>553<u>.</u>00</s></b><b class="c10 n">41</b><b class="c11 n">600037319</b><b class="c12">销售六部</b><b class="c13">傅士仁</b><b class="c14"><s>9</s>月<s>5</s>日</b><b class="c15">￥<s>2<u>,</u>553<u>.</u>00</s></b><b class="c16 n">41</b><b class="c17 n">600037319</b></div>
<div class="r" style="top:522px"><b class="c0">销售五部</b><b class="c1">徐晃</b><b class="c2"><s>9</s>月<s>6</s>日</b><b class="c3">￥<s>1<u>,</u>869<u>.</u>00</s></b><b class="c4 n">44</b><b class="c5 n">600095356</b><b class="c6">销售五部</b><b class="c7">徐晃</b><b class="c8"><s>9</s>月<s>6</s>日</b><b class="c9">￥<s>1<u>,</u>869<u>.</u>00</s></b><b class="c10 n">44</b><b class="c11 n">600095356</b><b class="c12">销售五部</b><b class="c13">徐晃</b><b class="c14"><s>9</s>月<s>6</s>日</b><b class="c15">￥<s>1<u>,</u>869<u>.</u>00</s></b><b class="c16 n">44</b><b class="c17 n">600095356</b></div>
<div class="r" style="top:540px"><b class="c0">销售四部</b><b class="c1">静姝</b><b class="c2"><s>8</s>月<s>29</s>日</b><b class="c3">￥<s>2<u>,</u>086<u>.</u>00</s></b><b class="c4 n">45</b><b class="c5 n">600047843</b><b class="c6">销售四部</b><b class="c7">静姝</b><b class="c8"><s>8</s>月<s>29</s>日</b><b class="c9">￥<s>2<u>,</u>086<u>.</u>00</s></b><b class="c10 n">45</b><b class="c11 n">600047843</b><b class="c12">销售四部</b><b class="c13">静姝</b><b class="c14"><s>8</s>月<s>29</s>日</b><b class="c15">￥<s>2<u>,</u>086<u>.</u>00</s></b><b class="c16 n">45</b><b class="c17 n">600047843</b></div>
<div class="r" style="top:558px"><b class="c0">销售三部</b><b class="c1">夏侯惇</b><b class="c2"><s>8</s>月<s>29</s>日</b><b class="c3">￥<s>3<u>,</u>334<u>.</u>00</s></b><b class="c4 n">46</b><b class="c5 n">600044473</b><b class="c6">销售三部</b><b class="c7">夏侯惇</b><b class="c8"><s>8</s>月<s>29</s>日</b><b class="c9">￥<s>3<u>,</u>334<u>.</u>00</s></b><b class="c10 n">46</b><b class="c11 n">600044473</b><b class="c12">销售三部</b><b class="c13">夏侯惇</b><b class="c14"><s>8</s>月<s>29</s>日</b><b class="c15">￥<s>3<u>,</u>334<u>.</u>00</s></b><b class="c16 n">46</b><b class="c17 n">600044473</b></div>
<div class="r" style="top:576px"><b class="c0">销售一部</b><b class="c1">曹皇后</b><b class="c2"><s>8</s>月<s>18</s>日</b><b class="c3">￥<s>3<u>,</u>303<u>.</u>00</s></b><b class="c4 n">47</b><b class="c5 n">600073392</b><b class="c6">销售一部</b><b class="c7">曹皇后</b><b class="c8"><s>8</s>月<s>18</s>日</b><b class="c9">￥<s>3<u>,</u>303<u>.</u>00</s></b><b class="c10 n">47</b><b class="c11 n">600073392</b><b class="c12">销售一部</b><b class="c13">曹皇后</b><b class="c14"><s>8</s>月<s>18</s>日</b><b class="c15">￥<s>3<u>,</u>303<u>.</u>00</s></b><b class="c16 n">47</b><b class="c17 n">600073392</b></div>
<div class="r" style="top:594px"><b class="c0">销售三部</b><b class="c1">赵云</b><b class="c2"><s>8</s>月<s>25</s>日</b><b class="c3">￥<s>1<u>,</u>605<u>.</u>00</s></b><b class="c4 n">47</b><b class="c5 n">600066709</b><b class="c6">销售三部</b><b class="c7">赵云</b><b class="c8"><s>8</s>月<s>25</s>日</b><b class="c9">￥<s>1<u>,</u>605<u>.</u>00</s></b><b class="c10 n">47</b><b class="c11 n">600066709</b><b class="c12">销售三部</b><b class="c13">赵云</b><b class="c14"><s>8</s>月<s>25</s>日</b><b class="c15">￥<s>1<u>,</u>605<u>.</u>00</s></b><b class="c16 n">47</b><b class="c17 n">600066709</b></div>
</div>
<div class="a" style="left:33px;top:216px;width:1px;height:594px;background:#d4d4d4"></div>
<div class="a" style="left:32px;top:197px;width:2px;height:19px;background:#2f9a41"></div>
<div class="a" style="left:1359px;top:196px;width:106px;height:21px;border:3px solid #42a846"></div>
<div class="a" style="left:1460px;top:212px;width:7px;height:7px;background:#42a846;border:1px solid #fff"></div>
<svg style="left:1340px;top:175px" width="150" height="62" viewBox="1340 175 150 62"><rect x="1347.750" y="180.950" width="133" height="49.300" rx="1.500" fill="none" stroke="#e9474c" stroke-width="3.500"/></svg>
<svg style="left:1400px;top:678px" width="76" height="76" viewBox="1400 678 76 76"><defs><radialGradient id="wg"><stop offset="0" stop-color="#fff" stop-opacity=".93"/><stop offset=".6" stop-color="#fff" stop-opacity=".93"/><stop offset="1" stop-color="#c9f2d4" stop-opacity=".96"/></radialGradient></defs><circle cx="1438" cy="716" r="34.500" fill="rgba(255,255,255,.35)"/><circle cx="1438" cy="716" r="30.500" fill="url(#wg)"/><circle cx="1438" cy="716" r="30.300" fill="none" stroke="rgba(250,252,250,.9)" stroke-width="4.200"/><circle cx="1438" cy="716" r="30.100" fill="none" stroke="#3dd268" stroke-width="4.800" stroke-dasharray="160.800 189.100" transform="rotate(-90 1438 716)"/></svg>
<div class="a" style="left:1419px;top:695px;font-size:23px;line-height:28px;color:#555;letter-spacing:-.6px;white-space:nowrap">85<span style="font-size:12.500px;letter-spacing:0;margin-left:1px">%</span></div>
<svg style="left:1418px;top:722px" width="9" height="13"><path d="M2.700 2.300a1.800 1.800 0 0 1 3.600 0v4.500a3.100 3.100 0 1 1-3.600 0z" fill="#fff" stroke="#2fc45c" stroke-width="1.500"/><path d="M4.500 4v4" stroke="#2fc45c" stroke-width="1.200"/><circle cx="4.500" cy="9" r="1.500" fill="#2fc45c"/></svg>
<div class="a" style="left:1431px;top:724px;font-size:9.500px;line-height:10px;color:#333;white-space:nowrap">42°C</div>
<div class="a" style="left:1541px;top:190px;width:14px;height:620px;background:#dedede"></div>
<div class="a" style="left:1541px;top:210px;width:14px;height:288px;background:#f3f3f3;border:1px solid #bdbdbd;border-radius:7px"></div>
<svg style="left:1536px;top:130px" width="64" height="690" viewBox="1536 130 64 690" fill="none" stroke="#4a4a4a" stroke-width="1.100">
<path d="M1538.500 176v634" stroke="#cfcfcf" stroke-width="1"/>
<path d="M1543 181.500h10M1543 183.500h10" stroke="#bcbcbc" stroke-width="1"/>
<path d="M1544.500 201l3.500-4l3.500 4z" fill="#8a8a8a" stroke="none"/>
<path d="M1570 143.500h16M1570 146.500h16" stroke="#c4c4c4" stroke-width="1"/>
<path d="M1573.500 169v13l3.300-2.800l2.200 4.600l1.800-.8l-2.200-4.500h4.400z" stroke-linejoin="round"/>
<rect x="1575.500" y="220.500" width="10" height="9" rx="1.500"/><circle cx="1575.500" cy="230" r="4.800" fill="#e9e9e9"/>
<path d="M1570.500 273v13.500h14M1573.500 286v-5h3v5M1576.500 286v-8h3v8M1579.500 286v-11h3v11"/>
<g stroke="#cfcfcf" stroke-width="1"><path d="M1570 326.500h12M1575 331.500h11M1570 336.500h8M1582 336.500h4"/><circle cx="1583.500" cy="326.500" r="1.600"/><circle cx="1573" cy="331.500" r="1.600"/><circle cx="1580" cy="336.500" r="1.600"/></g>
<g stroke="#cfcfcf" stroke-width="1"><path d="M1571.500 389v-12.500h13" stroke-dasharray="2 1.500"/><path d="M1575.500 388v-5.500h6M1580 380.500l2 2l-2 2M1585 379v6.500h-5M1581.500 383.500"/></g>
<rect x="1570.500" y="429.500" width="15" height="12" rx="1.500"/><path d="M1572 440l4-4l3 2.500l2.500-2l3 3"/><circle cx="1581" cy="433.500" r="1.200"/>
<path d="M1578 479.500l6.500 3.500v8l-6.500 3.500l-6.500-3.500v-8z"/><path d="M1578 491c-2-1.500-2.500-3.500-1.500-6c.5 1 1 1.500 1.500 1.500c.2-1.200.8-2 1.800-2.700c.7 3.200.2 5.500-1.800 7.200z" fill="#4a4a4a" stroke="none"/>
<path d="M1560 528.500h36" stroke="#d6d6d6" stroke-width="1"/>
<g fill="none" stroke="#9a9a9a" stroke-width=".9"><circle cx="1572.500" cy="553.500" r="1.200"/><circle cx="1578" cy="553.500" r="1.200"/><circle cx="1583.500" cy="553.500" r="1.200"/></g>
</svg>
<div class="a" style="left:1558px;top:186px;width:40px;height:16px;line-height:16px;text-align:center;font-size:12px;color:#555">选择</div>
<div class="a" style="left:1558px;top:238px;width:40px;height:16px;line-height:16px;text-align:center;font-size:12px;color:#555">形状</div>
<div class="a" style="left:1558px;top:290px;width:40px;height:16px;line-height:16px;text-align:center;font-size:12px;color:#555">图表</div>
<div class="a" style="left:1558px;top:342px;width:40px;height:16px;line-height:16px;text-align:center;font-size:12px;color:#c6c6c6">属性</div>
<div class="a" style="left:1558px;top:394px;width:40px;height:16px;line-height:16px;text-align:center;font-size:12px;color:#c6c6c6">分析</div>
<div class="a" style="left:1558px;top:445px;width:40px;height:16px;line-height:16px;text-align:center;font-size:12px;color:#555">图库</div>
<div class="a" style="left:1558px;top:497px;width:40px;height:16px;line-height:16px;text-align:center;font-size:12px;color:#555">风格</div>
<div class="a" style="left:1558px;top:563px;width:40px;height:16px;line-height:16px;text-align:center;font-size:12px;color:#555">设置</div>
<div class="a" style="left:0;top:810px;width:1600px;height:22px;background:#e8e8e8;border-top:1px solid #cfcfcf"></div>
<div class="a" style="left:119px;top:810px;width:72px;height:22px;background:#fff;border:1px solid #d5d5d5;border-top:none;text-align:center;line-height:24px;padding-left:3px;font-size:12.500px;font-weight:bold;color:#3aa648">Sheet2</div>
<div class="a" style="left:919px;top:813px;width:618px;height:16px;background:#dcdcdc"></div>
<div class="a" style="left:1077px;top:814px;width:450px;height:14px;background:#f3f3f3;border:1px solid #bdbdbd;border-radius:7px"></div>
<div class="a" style="left:0;top:832px;width:1600px;height:28px;background:#f4f4f4;border-top:1px solid #dadada"></div>
<div class="sel" style="left:1219px;top:834px;width:23px;height:23px;background:#c9c9c9"></div>
<svg style="left:0;top:810px" width="1600" height="50" viewBox="0 810 1600 50" fill="none" stroke="#4a4a4a" stroke-width="1.100">
<g stroke="#cdcdcd" stroke-width="1.200"><path d="M16.500 816v11M25 816l-5.500 5.500l5.500 5.500M49 816l-5.500 5.500l5.500 5.500M69 816l5.500 5.500l-5.500 5.500M93 816l5.500 5.500l-5.500 5.500M101.500 816v11"/></g>
<path d="M197 821.500h13M203.500 815v13" stroke="#444" stroke-width="1.200"/>
<path d="M910.500 816v11M913.500 816v11" stroke="#b0b0b0" stroke-width="1"/><path d="M931 817.500v7l-4-3.500z" fill="#555" stroke="none"/>
<rect x="15.500" y="839.500" width="9" height="6" rx=".8"/><path d="M24.500 841.500h4.500a1 1 0 0 1 1 1v3.500M20.500 845.500v3"/><rect x="16.500" y="848.500" width="12" height="5" rx=".8"/><path d="M46.500 836v20M150.500 836v20" stroke="#dcdcdc" stroke-width="1"/>
<path d="M65.500 839.500l6 2v5c0 3.500-2.500 5.500-6 7c-3.500-1.500-6-3.500-6-7v-5zM63 844l5 5M68 844l-5 5" stroke="#8a8a8a"/>
<path d="M1198.500 844v-4.500h4.500M1211.500 848v4.500h-4.500" stroke="#333"/><path d="M1207 839.500h4.500v4.500M1211.500 839.500l-5 5M1203 852.500h-4.500v-4.500M1198.500 852.500l5-5" stroke="#4e9f6e"/>
<rect x="1223.500" y="839.500" width="15" height="13" rx="1.200" stroke="#333" stroke-width="1.300"/><path d="M1227.500 839.500v13M1231 839.500v13M1234.500 839.500v13M1223.500 843.800h15M1223.500 848.200h15" stroke="#333" stroke-width="1.200"/>
<path d="M1256 839.500h-5a1.500 1.500 0 0 0-1.500 1.500v2M1249.500 850v1.500a1.500 1.500 0 0 0 1.500 1.500h5M1262 839.500h1.500a1.500 1.500 0 0 1 1.500 1.500v2M1265 850v1.500a1.500 1.500 0 0 1-1.500 1.500h-1.500M1259.500 838.500v15.500M1249.500 846.500h10M1262.500 846.500h2.500"/>
<rect x="1277.500" y="838.500" width="8" height="15" rx="1.500"/><rect x="1274.500" y="842.500" width="14" height="7" rx="1.500"/>
<path d="M1307 847c2.500-4 5-5.500 8-5.500s5.500 1.500 8 5.500c-2.500 4-5 5.500-8 5.500s-5.500-1.500-8-5.500z"/><circle cx="1315" cy="847" r="2.800"/><path d="M1315 836.500v3M1309 838l1.500 2.500M1321 838l-1.500 2.500"/>
<path d="M1336.500 836v20" stroke="#dcdcdc" stroke-width="1"/>
<path d="M1400 845.500h12" stroke="#444" stroke-width="2"/><path d="M1423 845.500h177" stroke="#7a7a7a" stroke-width="1"/><circle cx="1492" cy="845.500" r="6" fill="#f7f7f7" stroke="#555"/>
</svg>
<div class="dd" style="left:1293px;top:845px"></div><div class="dd" style="left:1383px;top:845px"></div>
<div class="a" style="left:78px;top:840px;height:16px;line-height:16px;font-size:12px;color:#808080">文档未保护</div>
<div class="a" style="left:1347px;top:839px;height:16px;line-height:16px;font-size:12px;color:#7a7f8c">100%</div>
<div class="a" style="left:1281px;top:787px;height:50px;line-height:50px;font-size:39px;font-weight:bold;color:#fff;white-space:nowrap;text-shadow:2px 2px 0 #000,2.500px 2.500px 0 #000;letter-spacing:.3px">头条 @<span style="letter-spacing:2.300px">极速手助</span></div>
<div class="a" style="left:1511px;top:829px;height:26px;line-height:26px;font-size:21px;font-weight:bold;color:#c39b6d;-webkit-text-stroke:.4px #c39b6d;white-space:nowrap">百度知道</div>
</body></html>
